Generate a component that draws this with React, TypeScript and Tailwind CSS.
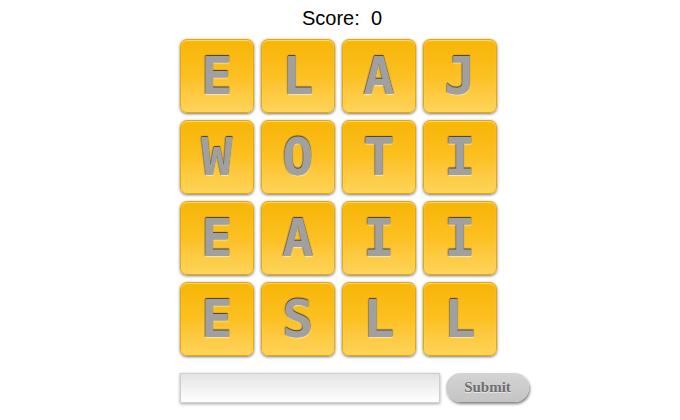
import React from "react";

const letters = ["E","L","A","J","W","O","T","I","E","A","I","I","E","S","L","L"];

export default function App() {
  return (
    <div className="w-[680px] h-[420px] bg-white flex flex-col">
      <div
        className="pt-[7px] text-center text-[20px] leading-[23px] text-black whitespace-pre pl-[4px]"
        style={{ fontFamily: '"Liberation Sans", Arial, sans-serif' }}
      >
        {"Score:  0"}
      </div>
      <div className="w-[320px] ml-[180px] mt-[9px]">
        <div className="grid grid-cols-[repeat(4,74px)] grid-rows-[repeat(4,74px)] gap-[7px]">
          {letters.map((l, i) => (
            <div
              key={i}
              className="rounded-[7px] flex items-center justify-center bg-gradient-to-b from-[#f8b502] via-[#fcc020] to-[#ffd458] border border-[#e8a800] shadow-[0_1px_3px_rgba(0,0,0,0.55),inset_0_1px_1px_rgba(255,255,255,0.5)] text-[52px] leading-none font-bold text-[#a0a0a0]"
              style={{
                fontFamily: '"DejaVu Sans Mono", monospace',
                textShadow: "0 -1px 1px rgba(50,50,50,0.9), -1px 0 1px rgba(80,80,80,0.5), 0 1px 1px rgba(255,245,200,0.9)",
              }}
            >
              {l}
            </div>
          ))}
        </div>
        <div className="flex items-start mt-[17px] gap-[6px] w-[360px]">
          <div className="w-[260px] h-[30px] border border-[#cfcfcf] bg-gradient-to-b from-[#e4e4e4] to-white shadow-[0_1px_3px_rgba(0,0,0,0.35)]" />
          <div
            className="w-[83px] h-[29px] rounded-full bg-gradient-to-b from-[#d4d4d4] to-[#c4c4c4] shadow-[1px_2px_3px_rgba(0,0,0,0.5)] flex items-center justify-center text-[15px] font-bold text-[#6e6e6e]"
            style={{ fontFamily: '"Liberation Serif", "Times New Roman", serif', textShadow: "0 1px 0 rgba(255,255,255,0.6)" }}
          >
            Submit
          </div>
        </div>
      </div>
    </div>
  );
}
